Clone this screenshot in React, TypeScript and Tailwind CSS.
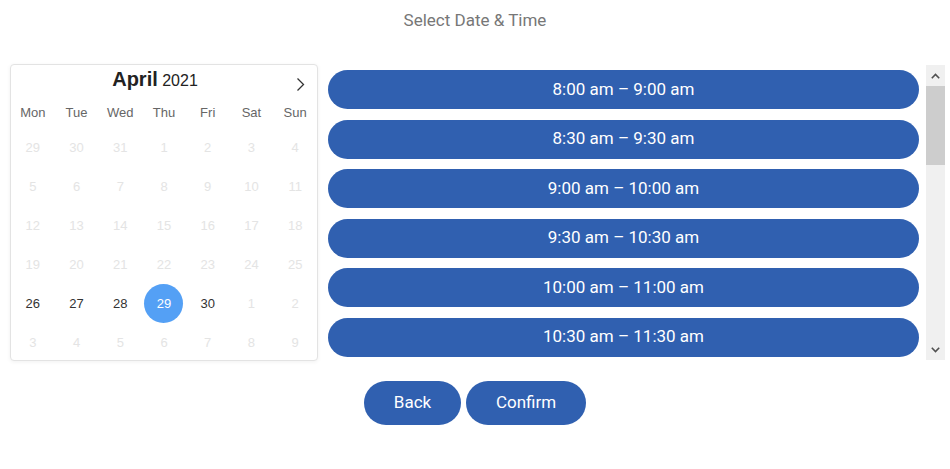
import React from 'react';

const weekdays = ['Mon', 'Tue', 'Wed', 'Thu', 'Fri', 'Sat', 'Sun'];

const weeks: number[][] = [
  [29, 30, 31, 1, 2, 3, 4],
  [5, 6, 7, 8, 9, 10, 11],
  [12, 13, 14, 15, 16, 17, 18],
  [19, 20, 21, 22, 23, 24, 25],
  [26, 27, 28, 29, 30, 1, 2],
  [3, 4, 5, 6, 7, 8, 9],
];

const slots = [
  '8:00 am – 9:00 am',
  '8:30 am – 9:30 am',
  '9:00 am – 10:00 am',
  '9:30 am – 10:30 am',
  '10:00 am – 11:00 am',
  '10:30 am – 11:30 am',
  '11:00 am – 12:00 pm',
];

function Calendar() {
  return (
    <div className="w-[308px] h-[297px] border border-[#e3e3e3] rounded-[4px] bg-white shadow-[0_1px_4px_rgba(0,0,0,0.06)] font-['Liberation_Sans',Arial,sans-serif]">
      <div className="flex items-center h-[32px]">
        <div className="flex-1 text-center pl-[10px] pb-[4px] text-[#222]">
          <span className="text-[20px] font-bold">April</span>{' '}
          <span className="text-[16px]">2021</span>
        </div>
        <div className="w-[22px] mr-[6px] flex justify-center pt-[6px]">
          <svg width="9" height="15" viewBox="0 0 9 15" fill="none">
            <polyline points="1.5,1.5 7.5,7.5 1.5,13.5" stroke="#333" strokeWidth="1.3" />
          </svg>
        </div>
      </div>
      <div className="grid grid-cols-7 h-[31px] items-center text-[13px] text-[#666]">
        {weekdays.map(d => (
          <div key={d} className="text-center">{d}</div>
        ))}
      </div>
      {weeks.map((w, i) => (
        <div key={i} className="grid grid-cols-7 h-[39px] items-center text-[13px]">
          {w.map((d, j) => {
            const active = i === 4 && j < 5;
            const selected = i === 4 && j === 3;
            return (
              <div key={j} className="flex justify-center">
                {selected ? (
                  <span className="w-[39px] h-[39px] rounded-full bg-[#54a0f5] text-white flex items-center justify-center">
                    {d}
                  </span>
                ) : (
                  <span className={active ? 'text-[#333]' : 'text-[#e4e4e4]'}>{d}</span>
                )}
              </div>
            );
          })}
        </div>
      ))}
    </div>
  );
}

function Scrollbar() {
  return (
    <div className="w-[19px] h-full bg-[#f0f0f0] flex flex-col">
      <div className="h-[21px] flex items-center justify-center">
        <svg width="9" height="6" viewBox="0 0 9 6">
          <polyline points="0.8,5.2 4.5,1.5 8.2,5.2" fill="none" stroke="#505050" strokeWidth="1.6" />
        </svg>
      </div>
      <div className="h-[79px] bg-[#cdcdcd]" />
      <div className="flex-1" />
      <div className="h-[21px] flex items-center justify-center">
        <svg width="9" height="6" viewBox="0 0 9 6">
          <polyline points="0.8,0.8 4.5,4.5 8.2,0.8" fill="none" stroke="#505050" strokeWidth="1.6" />
        </svg>
      </div>
    </div>
  );
}

export default function App() {
  return (
    <div className="w-[950px] h-[469px] bg-white font-['Roboto',Arial,sans-serif]">
      <div className="pt-[8px] text-center text-[17px] leading-6 text-[#777]">Select Date &amp; Time</div>
      <div className="flex mt-[32px] pl-[10px]">
        <Calendar />
        <div className="flex h-[295px] mt-px ml-[10px] w-[617px]">
          <div className="flex-1 overflow-hidden pt-[5px] flex flex-col gap-[10.5px]">
            {slots.map(s => (
              <button
                key={s}
                className="h-[39px] shrink-0 w-full rounded-full bg-[#3060b0] text-white text-[17px]"
              >
                {s}
              </button>
            ))}
          </div>
          <div className="w-[7px]" />
          <Scrollbar />
        </div>
      </div>
      <div className="flex justify-center gap-[5px] mt-[20px]">
        <button className="w-[97px] h-[44px] rounded-full bg-[#3060b0] text-white text-[17px]">Back</button>
        <button className="w-[120px] h-[44px] rounded-full bg-[#3060b0] text-white text-[17px]">Confirm</button>
      </div>
    </div>
  );
}
